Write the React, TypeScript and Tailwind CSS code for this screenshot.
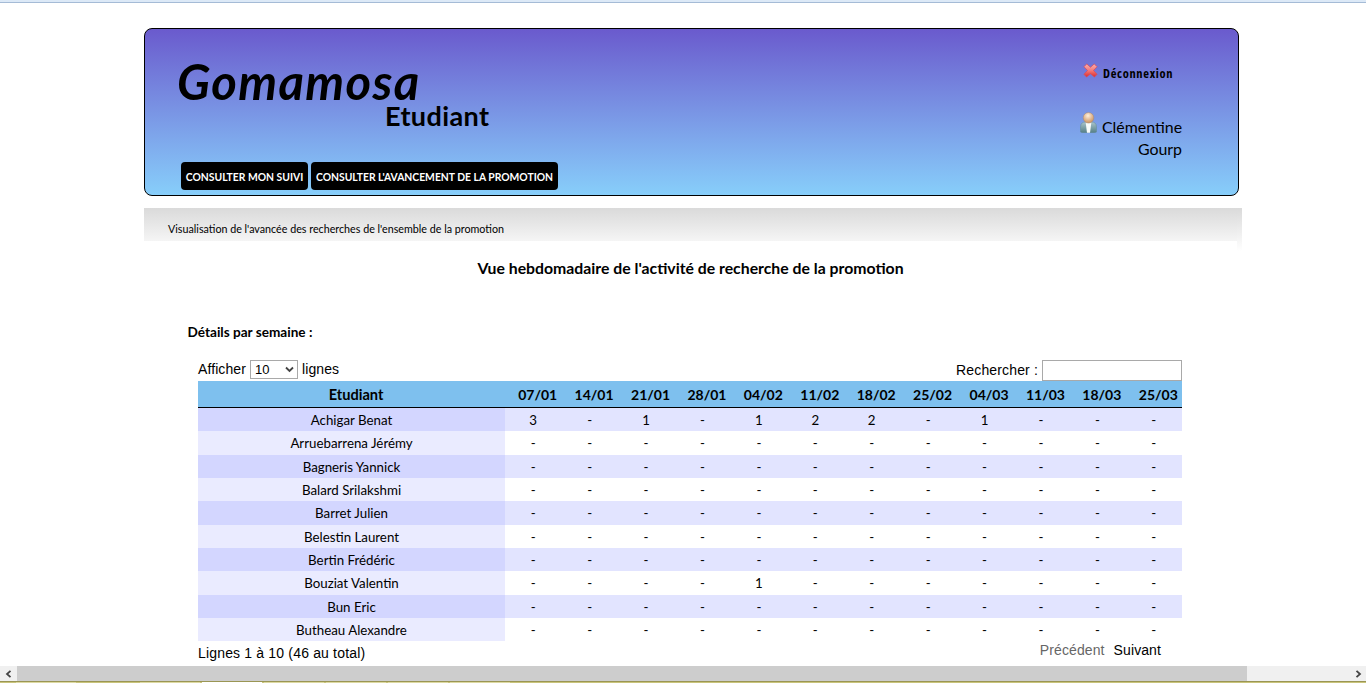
import React from "react";

const dates = ["07/01", "14/01", "21/01", "28/01", "04/02", "11/02", "18/02", "25/02", "04/03", "11/03", "18/03", "25/03"];
const none = "------------";
const rows: [string, string][] = [
  ["Achigar Benat", "3-1-122-1---"],
  ["Arruebarrena Jérémy", none],
  ["Bagneris Yannick", none],
  ["Balard Srilakshmi", none],
  ["Barret Julien", none],
  ["Belestin Laurent", none],
  ["Bertin Frédéric", none],
  ["Bouziat Valentin", "----1-------"],
  ["Bun Eric", none],
  ["Butheau Alexandre", none],
];

function Cross() {
  return (
    <svg width="15" height="15" viewBox="0 0 16 16" className="shrink-0">
      <defs>
        <linearGradient id="red" x1="0" y1="0" x2="0" y2="1">
          <stop offset="0" stopColor="#f9b0b0" />
          <stop offset="0.5" stopColor="#f47a7a" />
          <stop offset="1" stopColor="#dd2a2a" />
        </linearGradient>
      </defs>
      <path d="M4 1 L8 4.6 L12 1 L15 4 L11.2 8 L15 12 L12.2 15 L8 11.4 L3.8 15 L1 12 L4.8 8 L1 4 Z" fill="url(#red)" stroke="#d94c5c" strokeWidth="0.8" strokeLinejoin="round" />
    </svg>
  );
}

function Person() {
  return (
    <svg width="17" height="21" viewBox="0 0 17 21" className="shrink-0">
      <defs>
        <radialGradient id="face" cx="0.45" cy="0.3" r="0.7">
          <stop offset="0" stopColor="#fff0dc" />
          <stop offset="1" stopColor="#c98f5c" />
        </radialGradient>
        <linearGradient id="coat" x1="0" y1="0" x2="0" y2="1">
          <stop offset="0" stopColor="#a9c4cc" />
          <stop offset="1" stopColor="#557f86" />
        </linearGradient>
      </defs>
      <path d="M0.5 20 V15 Q0.5 10 5.5 10 H11.5 Q16.5 10 16.5 15 V20 Q15.5 20.7 14 20.7 H3 Q1.5 20.7 0.5 20 Z" fill="url(#coat)" stroke="#648a94" strokeWidth="0.5" />
      <path d="M5.7 10.5 H11.3 L10 20.7 H7 Z" fill="#f8fbfa" />
      <circle cx="8.5" cy="5.8" r="5.3" fill="url(#face)" stroke="#a98a78" strokeWidth="0.5" />
    </svg>
  );
}

export default function App() {
  return (
    <div className="flex h-[683px] w-[1366px] flex-col overflow-hidden bg-white font-['Lato',sans-serif] text-black">
      <div className="h-[3px] shrink-0 border-b border-[#a5bbd6] bg-[#dce9f7]" />
      <main className="flex min-h-0 flex-1 flex-col pt-[25px] pl-36">
        <header className="flex h-[168px] w-[1095px] shrink-0 justify-between rounded-lg border border-black bg-linear-to-b from-[#6a5acd] to-[#87cefa] pr-14 pl-8">
          <div className="flex flex-col items-start">
            <h1 className="mt-[27px] h-[51px] text-[49px] leading-[51px] font-bold tracking-[1.35px] whitespace-nowrap italic">Gomamosa</h1>
            <h2 className="-mt-2 ml-[208px] h-[34px] text-[27px] leading-[34px] font-bold tracking-[0.4px]">Etudiant</h2>
            <nav className="mt-[29px] ml-1 flex gap-[3px] text-[10.35px] font-bold text-white">
              <a className="flex h-7 w-[127px] items-center justify-center rounded-[4px] bg-black pt-[3px] whitespace-nowrap">CONSULTER MON SUIVI</a>
              <a className="flex h-7 w-[247px] items-center justify-center rounded-[4px] bg-black pt-[3px] whitespace-nowrap">CONSULTER L'AVANCEMENT DE LA PROMOTION</a>
            </nav>
          </div>
          <div className="flex w-[103px] flex-col pt-[34px]">
            <a className="flex h-5 gap-[5px] pl-1 font-['Open_Sans',sans-serif] text-[12.5px] leading-[22px] font-bold tracking-[0.66px] [font-stretch:75%]">
              <Cross />
              <span>Déconnexion</span>
            </a>
            <div className="mt-[29px] flex items-start gap-[5px] pl-px text-[15.9px] leading-[22px]">
              <Person />
              <p className="flex-1 pt-1 text-right">Clémentine<br />Gourp</p>
            </div>
          </div>
        </header>
        <div className="mt-3 h-[43px] w-[1098px] shrink-0 bg-linear-to-b from-[#dadada] to-[#ffffff]">
          <div className="h-full w-[1093px] bg-white">
            <p className="h-[33px] bg-linear-to-b from-[#dadada] to-[#f5f5f5] pl-6 text-[10.72px] leading-[42px]">Visualisation de l'avancée des recherches de l'ensemble de la promotion</p>
          </div>
        </div>
        <h3 className="-mt-px w-[1093px] shrink-0 text-center text-[15.8px] leading-9 font-bold">Vue hebdomadaire de l'activité de recherche de la promotion</h3>
        <h4 className="mt-9 ml-[43.5px] h-5 shrink-0 text-[13.6px] leading-5 font-bold">Détails par semaine :</h4>
        <section className="ml-[54px] w-[984px] shrink-0">
          <div className="mt-[18px] flex h-[21px] items-start justify-between font-['Liberation_Sans',sans-serif] text-sm leading-[18px]">
            <label className="flex gap-1 tracking-[0.1px]">Afficher
              <span className="flex h-[19px] w-12 items-center justify-between border border-[#a9a9a9] bg-white pr-[3px] pl-1 text-[13px]">10
                <svg width="9" height="7" viewBox="0 0 9 7"><path d="M1 1.5 L4.5 5 L8 1.5" fill="none" stroke="#444" strokeWidth="1.8" /></svg>
              </span>
              lignes
            </label>
            <label className="flex gap-1 leading-5 tracking-[0.15px]">Rechercher :
              <input className="h-[21px] w-[140px] border border-[#a9a9a9] bg-white" />
            </label>
          </div>
          <div className="grid h-[27px] grid-cols-[307px_repeat(12,minmax(0,1fr))] border-b border-black bg-[#7ec0ee] text-center text-[14px] leading-7 font-bold">
            <span className="pl-[9px] text-[14.6px]">Etudiant</span>
            {dates.map((d) => <span key={d} className="pl-[9px]">{d}</span>)}
          </div>
          {rows.map(([name, values], i) => (
            <div key={name} className={`grid h-[23.35px] grid-cols-[307px_repeat(12,minmax(0,1fr))] text-center text-[13.3px] leading-[25.2px] ${i % 2 ? "bg-white" : "bg-[#e2e4ff]"}`}>
              <span className={`h-[23.35px] ${i % 2 ? "bg-[#eaebff]" : "bg-[#d3d6ff]"}`}>{name}</span>
              {values.split("").map((v, j) => <span key={j}>{v}</span>)}
            </div>
          ))}
          <footer className="flex justify-between font-['Liberation_Sans',sans-serif] text-sm">
            <span className="pt-0.5 tracking-[0.17px]">Lignes 1 à 10 (46 au total)</span>
            <span className="-mt-px flex gap-[9px] pr-[21px] tracking-[0.1px]"><a className="text-[#666]">Précédent</a><a>Suivant</a></span>
          </footer>
        </section>
      </main>
      <div className="flex h-[15px] shrink-0 items-center bg-[#f0f0f0]">
        <div className="flex w-[17px] justify-center"><svg width="7" height="8" viewBox="0 0 7 8"><path d="M5.5 0.8 L2 4 L5.5 7.2" fill="none" stroke="#444" strokeWidth="1.8" /></svg></div>
        <div className="h-full w-[1230px] bg-[#cdcdcd]" />
        <div className="flex flex-1 justify-end pr-1"><svg width="7" height="8" viewBox="0 0 7 8"><path d="M1.5 0.8 L5 4 L1.5 7.2" fill="none" stroke="#444" strokeWidth="1.8" /></svg></div>
      </div>
      <div className="flex h-0.5 shrink-0 gap-0.5 border-t border-[#9a9654] bg-[#c9c47b] pl-4">
        <span className="mr-[62px] w-[60px] bg-[#ddd9a2]" />
        <span className="w-15 bg-[#ddd9a2]" />
        <span className="w-15 bg-white" />
        {[0, 1, 2, 3].map((n) => <span key={n} className="w-15 bg-[#ddd9a2]" />)}
      </div>
    </div>
  );
}
